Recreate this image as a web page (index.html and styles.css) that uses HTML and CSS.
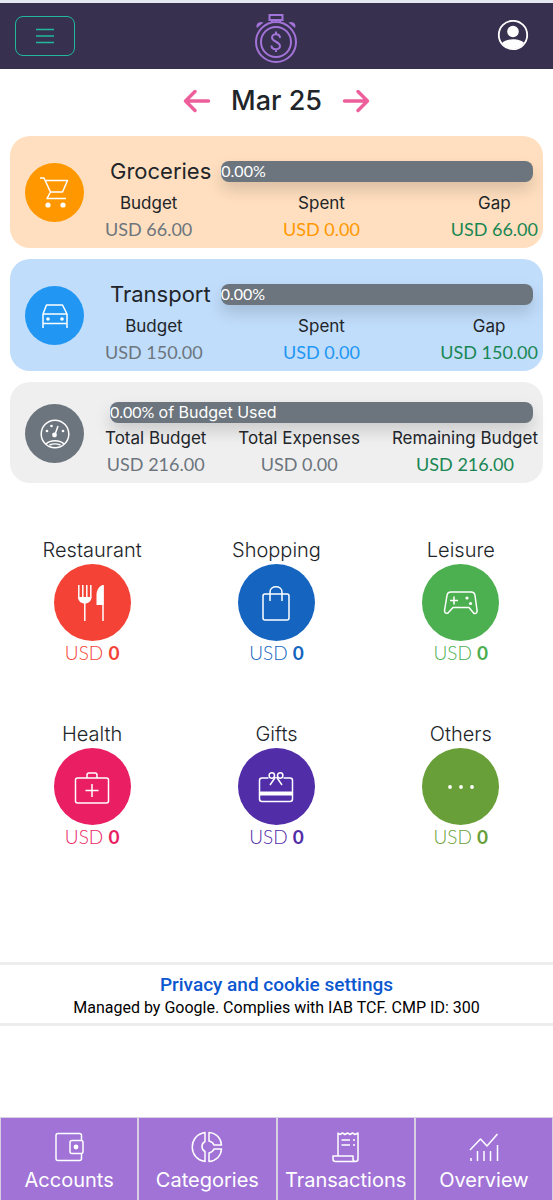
FILE: index.html
```html
<!DOCTYPE html>
<html lang="en">
<head>
<meta charset="utf-8">
<meta name="viewport" content="width=device-width, initial-scale=1">
<title>Budget</title>
<link rel="stylesheet" href="styles.css">
</head>
<body>
<header class="topbar">
  <button class="menu-button" type="button" aria-label="Menu">
    <svg width="20" height="18" viewBox="0 0 20 18"><path d="M1 2.500h18M1 9h18M1 15.500h18"/></svg>
  </button>
  <svg class="logo" width="44" height="52" viewBox="0 0 44 52" aria-hidden="true">
    <circle cx="22" cy="30" r="20"/><circle cx="22" cy="30" r="15"/>
    <path d="M18 10V8h-2.500V3h13v5H26v2M18 8h8"/>
    <path class="logo-fill" d="M3 16c-2-4 2.500-7.500 6.500-5.500zM41 16c2-4-2.500-7.500-6.500-5.500z"/>
    <path d="M26 26c0-5-8-5-8-.5s8 4 8 8.500-8.500 4.500-8.500-.5M22 19.500v2.500M22 37v3"/>
  </svg>
  <button class="profile-button" type="button" aria-label="Profile">
    <svg width="32" height="32" viewBox="0 0 32 32"><circle cx="16" cy="15" r="14.200" fill="none" stroke="#fff" stroke-width="1.800"/><circle cx="16" cy="11.500" r="5.800" fill="#fff"/><path d="M5 23c4-5 18-5 22 0-5 8-17 8-22 0z" fill="#fff"/></svg>
  </button>
</header>

<main class="content">
  <div class="month">
    <button class="month-button" type="button" aria-label="Previous month"><svg width="28" height="24" viewBox="0 0 28 24"><path d="M25.500 12H2.500M12 2.500L2.500 12l9.500 9.500"/></svg></button>
    <h1 class="month-name">Mar 25</h1>
    <button class="month-button" type="button" aria-label="Next month"><svg width="28" height="24" viewBox="0 0 28 24"><path d="M2.500 12h23M16 2.500l9.500 9.500-9.500 9.500"/></svg></button>
  </div>

  <section class="cards">
    <article class="card orange">
      <span class="badge"><svg class="icon" width="30" height="34" viewBox="0 0 30 34"><path d="M0 2h4l6.500 14L7 22.500h19M6 4.500h21.500l-5 11.500H11"/><circle class="solid" cx="8" cy="29" r="2.600"/><circle class="solid" cx="23" cy="29" r="2.600"/></svg></span>
      <div class="card-body">
        <div class="card-head"><h2 class="card-name">Groceries</h2><div class="bar">0.00%</div></div>
        <dl class="stats">
          <div class="stat"><dt>Budget</dt><dd class="muted">USD 66.00</dd></div>
          <div class="stat"><dt>Spent</dt><dd class="accent">USD 0.00</dd></div>
          <div class="stat"><dt>Gap</dt><dd class="good">USD 66.00</dd></div>
        </dl>
      </div>
    </article>
    <article class="card blue">
      <span class="badge"><svg class="icon" width="30" height="26" viewBox="0 0 30 26"><path d="M3 25V11L6.500 2h16L27 11v14M3 11h24M3 20.500h24"/><circle class="solid" cx="8" cy="16" r="1.800"/><circle class="solid" cx="22" cy="16" r="1.800"/></svg></span>
      <div class="card-body">
        <div class="card-head"><h2 class="card-name">Transport</h2><div class="bar">0.00%</div></div>
        <dl class="stats">
          <div class="stat"><dt>Budget</dt><dd class="muted">USD 150.00</dd></div>
          <div class="stat"><dt>Spent</dt><dd class="accent">USD 0.00</dd></div>
          <div class="stat"><dt>Gap</dt><dd class="good">USD 150.00</dd></div>
        </dl>
      </div>
    </article>
    <article class="card gray">
      <span class="badge"><svg class="icon" width="30" height="30" viewBox="0 0 30 30"><circle cx="15" cy="15" r="13.800"/><path d="M15 15.500L18 7M6 25c4-4.500 14-4.500 18 0M9.500 26c3-1.500 8-1.500 11 0"/><circle class="solid" cx="14.500" cy="16" r="2.400"/><circle class="solid" cx="7" cy="12" r="1.300"/><circle class="solid" cx="11.500" cy="7" r="1.300"/><circle class="solid" cx="23" cy="12" r="1.300"/></svg></span>
      <div class="card-body">
        <div class="card-head"><div class="bar">0.00% <span class="bar-words">of Budget Used</span></div></div>
        <dl class="stats">
          <div class="stat"><dt>Total Budget</dt><dd class="muted">USD 216.00</dd></div>
          <div class="stat"><dt>Total Expenses</dt><dd class="muted">USD 0.00</dd></div>
          <div class="stat"><dt>Remaining Budget</dt><dd class="good">USD 216.00</dd></div>
        </dl>
      </div>
    </article>
  </section>

  <section class="categories">
    <button class="category red" type="button"><span class="label">Restaurant</span>
      <span class="disc"><svg class="icon" width="36" height="40" viewBox="0 0 36 40"><path d="M4.800 2v13M8.800 2v13M12.800 2v13M16.800 2v13M10.800 18v20M29 2v36"/><path class="solid" d="M4 14h13.500c0 4-3 6.500-6.700 6.500S4 18 4 14zM22.500 22V12c0-5 3-9.500 7-10v20z"/></svg></span>
      <span class="amount">USD <b>0</b></span></button>
    <button class="category navy" type="button"><span class="label">Shopping</span>
      <span class="disc"><svg class="icon" width="36" height="40" viewBox="0 0 36 40"><rect x="5" y="11" width="26" height="26" rx="2"/><path d="M12 18v-9c0-7 12-7 12 0v9"/></svg></span>
      <span class="amount">USD <b>0</b></span></button>
    <button class="category green" type="button"><span class="label">Leisure</span>
      <span class="disc"><svg class="icon" width="36" height="26" viewBox="0 0 36 26"><path d="M8 2h20q3.500 0 4 3.500l2 14.500q.5 4-3 3.500L26 17.500H10L5 23q-3.500 1-3.500-2.500L4 5.500Q4.500 2 8 2zM7 10.500h8M11 6.500v8"/><circle class="solid" cx="24" cy="8" r="1.600"/><circle class="solid" cx="27.500" cy="13.500" r="1.600"/></svg></span>
      <span class="amount">USD <b>0</b></span></button>
    <button class="category pink" type="button"><span class="label">Health</span>
      <span class="disc"><svg class="icon" width="36" height="36" viewBox="0 0 36 36"><rect x="1.500" y="9" width="33" height="25" rx="2"/><path d="M13 9V6q0-2 2-2h6q2 0 2 2v3M11.500 21.500h13M18 15v13"/></svg></span>
      <span class="amount">USD <b>0</b></span></button>
    <button class="category purple" type="button"><span class="label">Gifts</span>
      <span class="disc"><svg class="icon" width="36" height="32" viewBox="0 0 36 32"><path d="M10.500 7H4q-2.500 0-2.500 2.500V28q0 2.500 2.500 2.500h28q2.500 0 2.500-2.500V9.500Q34.500 7 32 7h-6.500M17.500 6L12 14M18.500 6l5.500 8"/><path class="solid" d="M2 20.500h32v4H2z"/><circle cx="13.800" cy="4.500" r="2.700"/><circle cx="22.200" cy="4.500" r="2.700"/></svg></span>
      <span class="amount">USD <b>0</b></span></button>
    <button class="category olive" type="button"><span class="label">Others</span>
      <span class="disc"><svg class="icon" width="28" height="6" viewBox="0 0 28 6"><circle class="solid" cx="3" cy="3" r="1.900"/><circle class="solid" cx="14" cy="3" r="1.900"/><circle class="solid" cx="25" cy="3" r="1.900"/></svg></span>
      <span class="amount">USD <b>0</b></span></button>
  </section>
</main>

<footer class="privacy">
  <a class="privacy-link" href="#privacy">Privacy and cookie settings</a>
  <p class="privacy-note">Managed by Google. Complies with IAB TCF. CMP ID: 300</p>
</footer>

<nav class="tabs">
  <a class="tab" href="#accounts"><svg class="icon" width="32" height="32" viewBox="0 0 32 32"><path d="M28.500 9V4.500q0-2-2-2H5q-2 0-2 2v23q0 2 2 2h21.500q2 0 2-2V22"/><rect x="17" y="9.500" width="13" height="13" rx="2"/><circle class="solid" cx="23" cy="16" r="2.400"/></svg>Accounts</a>
  <a class="tab" href="#categories"><svg class="icon" width="32" height="32" viewBox="0 0 32 32"><path d="M14 1.500v9c-4 2-4 8 0 10v10C-3 28-3 4 14 1.500zM18 1.500C25 2 30 7 30.500 14H23q-1-3-5-4zM18 30.500C25 30 30 25 30.500 18H23q-1 3-5 4z"/></svg>Categories</a>
  <a class="tab" href="#transactions"><svg class="icon" width="32" height="32" viewBox="0 0 32 32"><path d="M8 25V2l2 1.500L12.500 2 15 3.500 17.500 2 20 3.500 22.500 2 25 3.500 28 2v26q0 2.500-2.500 2.500t-2.500-2.500v-3H3v3q0 2.500 2.500 2.500h20M11.500 9H20M11.500 14H20M23 9h2M23 14h2"/></svg>Transactions</a>
  <a class="tab" href="#overview"><svg class="icon" width="32" height="32" viewBox="0 0 32 32"><path d="M2 19L12.500 8l6.500 7L29.500 3M3 30v-3M9.500 30V20M16 30V20M22.500 30V20M29.500 30V14"/></svg>Overview</a>
</nav>
</body>
</html>
```

FILE: styles.css
```css
* { box-sizing: border-box; }

body {
  margin: 0;
  min-height: 100vh;
  display: flex;
  flex-direction: column;
  background: #fff;
  color: #212529;
  font-family: Inter, "Open Sans", sans-serif;
  font-size: 16px;
}

button { font: inherit; color: inherit; background: none; border: 0; padding: 0; cursor: pointer; }
a { text-decoration: none; }
h1, h2, dl, dd, p { margin: 0; }
svg { display: block; }

.icon { fill: none; stroke: #fff; stroke-width: 1.500; stroke-linejoin: round; }
.icon .solid { fill: #fff; stroke: none; }

.topbar {
  display: grid;
  grid-template-columns: 1fr auto 1fr;
  align-items: center;
  height: 69px;
  padding: 0 24px 0 15px;
  background: #37304e;
  border-top: 3px solid #e4e8f1;
}

.menu-button {
  display: grid;
  place-items: center;
  width: 60px;
  height: 40px;
  border: 1px solid #20b99c;
  border-radius: 8px;
}

.menu-button svg { fill: none; stroke: #20b99c; stroke-width: 1.500; }
.logo { fill: none; stroke: #a273d8; stroke-width: 2; margin-left: 8px; margin-top: 4px; }
.logo .logo-fill { fill: #a273d8; stroke: none; }
.profile-button { justify-self: end; }

.month {
  display: flex;
  justify-content: center;
  align-items: center;
  gap: 20px;
  height: 64px;
}

.month-name { font-size: 27px; font-weight: 500; line-height: 32px; }
.month-button svg { fill: none; stroke: #ec5f9a; stroke-width: 3.500; stroke-linecap: round; stroke-linejoin: round; }

.cards { display: grid; gap: 11px; padding: 3px 10px 0; }

.card {
  display: flex;
  align-items: center;
  padding: 19px 5px 6px 15px;
  border-radius: 20px;
}

.orange { background: #ffdfbf; --accent: #ff9800; }
.blue { background: #c0ddfb; --accent: #2196f3; }
.gray { background: #efefef; --accent: #6c757d; }

.badge {
  display: grid;
  place-items: center;
  flex: none;
  width: 59px;
  height: 59px;
  margin-bottom: 12px;
  border-radius: 50%;
  background: var(--accent);
}

.card-body { flex: 1; min-width: 0; margin-left: 21px; }
.card-head { display: flex; align-items: center; gap: 10px; padding: 0 5px; }
.card-name { font-size: 22px; font-weight: 400; line-height: 32px; }

.bar {
  flex: 1;
  height: 21px;
  border-radius: 8px;
  background: #6c757d;
  color: #fff;
  font-family: Lato, sans-serif;
  font-size: 16px;
  line-height: 19px;
  white-space: nowrap;
  box-shadow: 0 8px 16px rgba(0, 0, 0, 0.15);
}

.bar-words { font-family: Inter, sans-serif; }

.stats { position: relative; display: flex; justify-content: space-between; margin-top: 4px; text-align: center; }
.stat dt { font-size: 17px; line-height: 25px; }
.stat dd { font-family: Lato, sans-serif; font-size: 18px; line-height: 26px; }
.gray { padding-top: 20px; }
.gray .stats { margin-top: 3px; }

.muted { color: #6c757d; }
.accent { color: var(--accent); }
.good { color: #198754; }

.categories { display: grid; grid-template-columns: repeat(3, 1fr); gap: 55px 0; margin-top: 53px; }

.category { display: flex; flex-direction: column; align-items: center; color: var(--accent); }
.label { color: #212529; font-size: 20px; font-weight: 300; line-height: 28px; }
.disc { display: grid; place-items: center; width: 77px; height: 77px; border-radius: 50%; background: var(--accent); }
.amount { font-family: Lato, sans-serif; font-size: 19px; font-weight: 300; line-height: 24px; }
.amount b { font-weight: 700; }

.red { --accent: #f44336; }
.navy { --accent: #1565c0; }
.green { --accent: #4caf50; }
.pink { --accent: #e91e63; }
.purple { --accent: #512da8; }
.olive { --accent: #689f38; }

.privacy {
  margin-top: auto;
  padding: 8px 0 4px;
  border: solid #ededed;
  border-width: 3px 0;
  text-align: center;
  font-family: Roboto, sans-serif;
}

.privacy-link { color: #0b57d0; font-size: 19px; font-weight: 500; line-height: 24px; }
.privacy-note { color: #000; font-size: 16px; line-height: 22px; }

.tabs { display: grid; grid-template-columns: repeat(4, 1fr); margin-top: 91px; }

.tab {
  display: flex;
  flex-direction: column;
  align-items: center;
  gap: 2px;
  height: 83px;
  padding-top: 13px;
  border: 1px solid #d8cfe5;
  border-bottom: 0;
  background: #a173d7;
  color: #fff;
  font-size: 20px;
  line-height: 30px;
}
```
